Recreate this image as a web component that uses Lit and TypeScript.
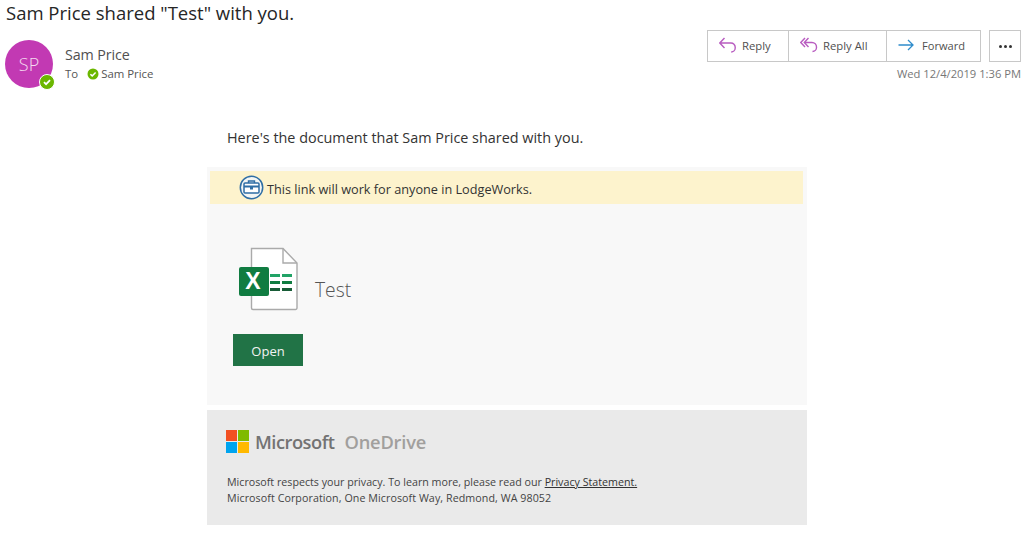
import { LitElement, html, css } from "lit";
import { customElement } from "lit/decorators.js";

const check = html`<svg viewBox="0 0 12 12" width="12" height="12"><circle cx="6" cy="6" r="5.5" fill="#6bb700"/><path d="M3.4 6.200 5.200 7.900 8.600 4.400" fill="none" stroke="#fff" stroke-width="1.500"/></svg>`;

@customElement("app-root")
export class AppRoot extends LitElement {
  static styles = css`
    :host { display: block; width: 1027px; height: 540px; overflow: hidden; background: #fff; font-family: "Open Sans", "Noto Sans", sans-serif; color: #333; }
    .title { margin: 0; padding: 0 0 0 6px; height: 25px; font-size: 18.5px; line-height: 25px; font-weight: 400; color: #262626; white-space: nowrap; }
    .head { display: flex; justify-content: space-between; height: 78px; padding: 5px 6px 0 5px; box-sizing: border-box; }
    .sender { display: flex; gap: 12px; padding-top: 10px; }
    .avatar { width: 48px; height: 48px; border-radius: 50%; background: #c239b3; color: #f4d9f0; font-size: 18px; font-weight: 300; display: flex; align-items: center; justify-content: center; position: relative; }
    .badge { position: absolute; right: -2px; bottom: -2px; width: 14px; height: 14px; border-radius: 50%; background: #6bb700; border: 1px solid #fff; display: flex; align-items: center; justify-content: center; }
    .badge svg { width: 14px; height: 14px; }
    .who { padding-top: 6px; }
    .name { font-size: 14.3px; line-height: 18px; color: #505050; letter-spacing: -0.1px; }
    .to { display: flex; align-items: center; font-size: 11.4px; line-height: 16px; color: #555; margin-top: 2px; }
    .to svg { margin: 0 2px 0 9px; }
    .actions { display: flex; flex-direction: column; align-items: flex-end; }
    .btns { display: flex; gap: 8px; }
    .group { display: flex; height: 32px; border: 1px solid #c8c8c8; box-sizing: border-box; }
    .btn { display: flex; align-items: center; gap: 5px; padding: 0 0 2px 11px; box-sizing: border-box; font-size: 11.3px; color: #505050; border-right: 1px solid #c8c8c8; white-space: nowrap; }
    .reply { width: 81px; }
    .all { width: 98px; }
    .fwd { width: 93px; border-right: 0; gap: 8px; font-size: 11.1px; }
    .more { width: 32px; height: 32px; border: 1px solid #c8c8c8; box-sizing: border-box; display: flex; align-items: center; justify-content: center; gap: 2px; }
    .more i { width: 3px; height: 3px; border-radius: 50%; background: #333; }
    .date { font-size: 11.2px; line-height: 16px; margin-top: 4px; color: #777; }
    .mail { margin-left: 207px; width: 600px; }
    .intro { padding: 25px 0 0 20px; height: 64px; box-sizing: border-box; font-size: 14.4px; line-height: 20px; color: #333; }
    .card { background: #f8f8f8; height: 238px; padding-top: 4px; box-sizing: border-box; }
    .notice { margin: 0 3px; width: 593px; height: 33px; background: #fdf3cd; display: flex; align-items: center; gap: 3px; padding-left: 29px; box-sizing: border-box; font-size: 12.7px; color: #333; }
    .notice span { padding-top: 3px; }
    .file { display: flex; align-items: center; margin: 43px 0 0 31px; gap: 17px; }
    .file span { font-size: 19.3px; font-weight: 300; color: #555; padding-top: 20px; }
    .xl { position: relative; width: 60px; height: 64px; }
    .xl b { position: absolute; left: 0; top: 20px; width: 30px; height: 29px; display: flex; align-items: center; justify-content: center; color: #fff; font-size: 23px; font-weight: 700; font-family: "Liberation Sans", sans-serif; }
    .open { margin: 23px 0 0 26px; width: 70px; height: 32px; padding-top: 1px; box-sizing: border-box; background: #217346; color: #f2f2f2; font-size: 13px; display: flex; align-items: center; justify-content: center; }
    .foot { margin-top: 5px; height: 115px; background: #eaeaea; padding: 19px 0 0 19px; box-sizing: border-box; }
    .brand { display: flex; align-items: center; gap: 6px; height: 24px; font-size: 18.3px; font-weight: 600; letter-spacing: -0.5px; color: #737373; }
    .brand .od { margin-left: 4px; color: #a19f9d; letter-spacing: -0.2px; }
    .logo { display: grid; grid-template-columns: 11px 11px; grid-template-rows: 11px 11px; gap: 1px; }
    .logo i { display: block; }
    .legal { margin: 21px 0 0 1px; font-size: 10.7px; line-height: 16px; color: #444; white-space: nowrap; }
    .legal u { color: #333; }
    .line2 { letter-spacing: 0.07px; }
  `;

  render() {
    return html`
      <h1 class="title">Sam Price shared "Test" with you.</h1>
      <div class="head">
        <div class="sender">
          <div class="avatar">SP<span class="badge">${check}</span></div>
          <div class="who">
            <div class="name">Sam Price</div>
            <div class="to">To ${check} Sam Price</div>
          </div>
        </div>
        <div class="actions">
          <div class="btns">
            <div class="group">
              <div class="btn reply"><svg width="18" height="16" viewBox="0 0 18 16" fill="none" stroke="#b85cc0" stroke-width="1.400"><path d="M5.500 1 .8 6 5.500 11M.8 6H12a4.200 4.200 0 0 1 4.200 4.200V11a4 4 0 0 1-4 4"/></svg>Reply</div>
              <div class="btn all"><svg width="18" height="16" viewBox="0 0 18 16" fill="none" stroke="#b85cc0" stroke-width="1.400"><path d="M5 1 .8 5.500 5 10M8.500 1 4.300 5.500 8.500 10M4.300 5.500H12a4.500 4.500 0 0 1 4.500 4.500v.5a4 4 0 0 1-4 4"/></svg>Reply All</div>
              <div class="btn fwd"><svg width="16" height="12" viewBox="0 0 16 12" fill="none" stroke="#2e8ccb" stroke-width="1.300"><path d="M.5 6H15M10 1l5 5-5 5"/></svg>Forward</div>
            </div>
            <div class="more"><i></i><i></i><i></i></div>
          </div>
          <div class="date">Wed 12/4/2019 1:36 PM</div>
        </div>
      </div>
      <div class="mail">
        <div class="intro">Here's the document that Sam Price shared with you.</div>
        <div class="card">
          <div class="notice">
            <svg width="25" height="25" viewBox="0 0 25 25"><circle cx="12.500" cy="12.500" r="11.200" fill="#f3f6f5" stroke="#2f6ea5" stroke-width="1.500"/><rect x="5" y="8" width="15" height="10" rx="1" fill="#fff" stroke="#2f6ea5" stroke-width="1.500"/><path d="M9.500 8V6h6v2" fill="none" stroke="#2f6ea5" stroke-width="1.400"/><path d="M5 11.500h15M11 13.500h3" fill="none" stroke="#2f6ea5" stroke-width="2"/></svg>
            <span>This link will work for anyone in LodgeWorks.</span>
          </div>
          <div class="file">
            <div class="xl">
              <svg width="60" height="64" viewBox="0 0 60 64">
                <path d="M13.500 1.500H45L59 16v45a1.500 1.500 0 0 1-1.500 1.500H15A1.500 1.500 0 0 1 13.500 61Z" fill="#fff" stroke="#aaa" stroke-width="1.400"/>
                <path d="M45 1.500V16H59" fill="none" stroke="#aaa" stroke-width="1.400"/>
                <path d="M32 27h10v3H32zM44 27h10v3H44z" fill="#21a366"/>
                <path d="M32 34h10v3H32zM44 34h10v3H44z" fill="#107c41"/>
                <path d="M32 41h10v3H32zM44 41h10v3H44z" fill="#185c37"/>
                <rect x="1" y="20" width="30" height="29" rx="2" fill="#107c41"/>
              </svg>
              <b>X</b>
            </div>
            <span>Test</span>
          </div>
          <div class="open">Open</div>
        </div>
        <div class="foot">
          <div class="brand">
            <div class="logo"><i style="background:#f25022"></i><i style="background:#7fba00"></i><i style="background:#00a4ef"></i><i style="background:#ffb900"></i></div>
            Microsoft <span class="od">OneDrive</span>
          </div>
          <div class="legal">Microsoft respects your privacy. To learn more, please read our <u>Privacy Statement.</u><br><span class="line2">Microsoft Corporation, One Microsoft Way, Redmond, WA 98052</span></div>
        </div>
      </div>
    `;
  }
}
